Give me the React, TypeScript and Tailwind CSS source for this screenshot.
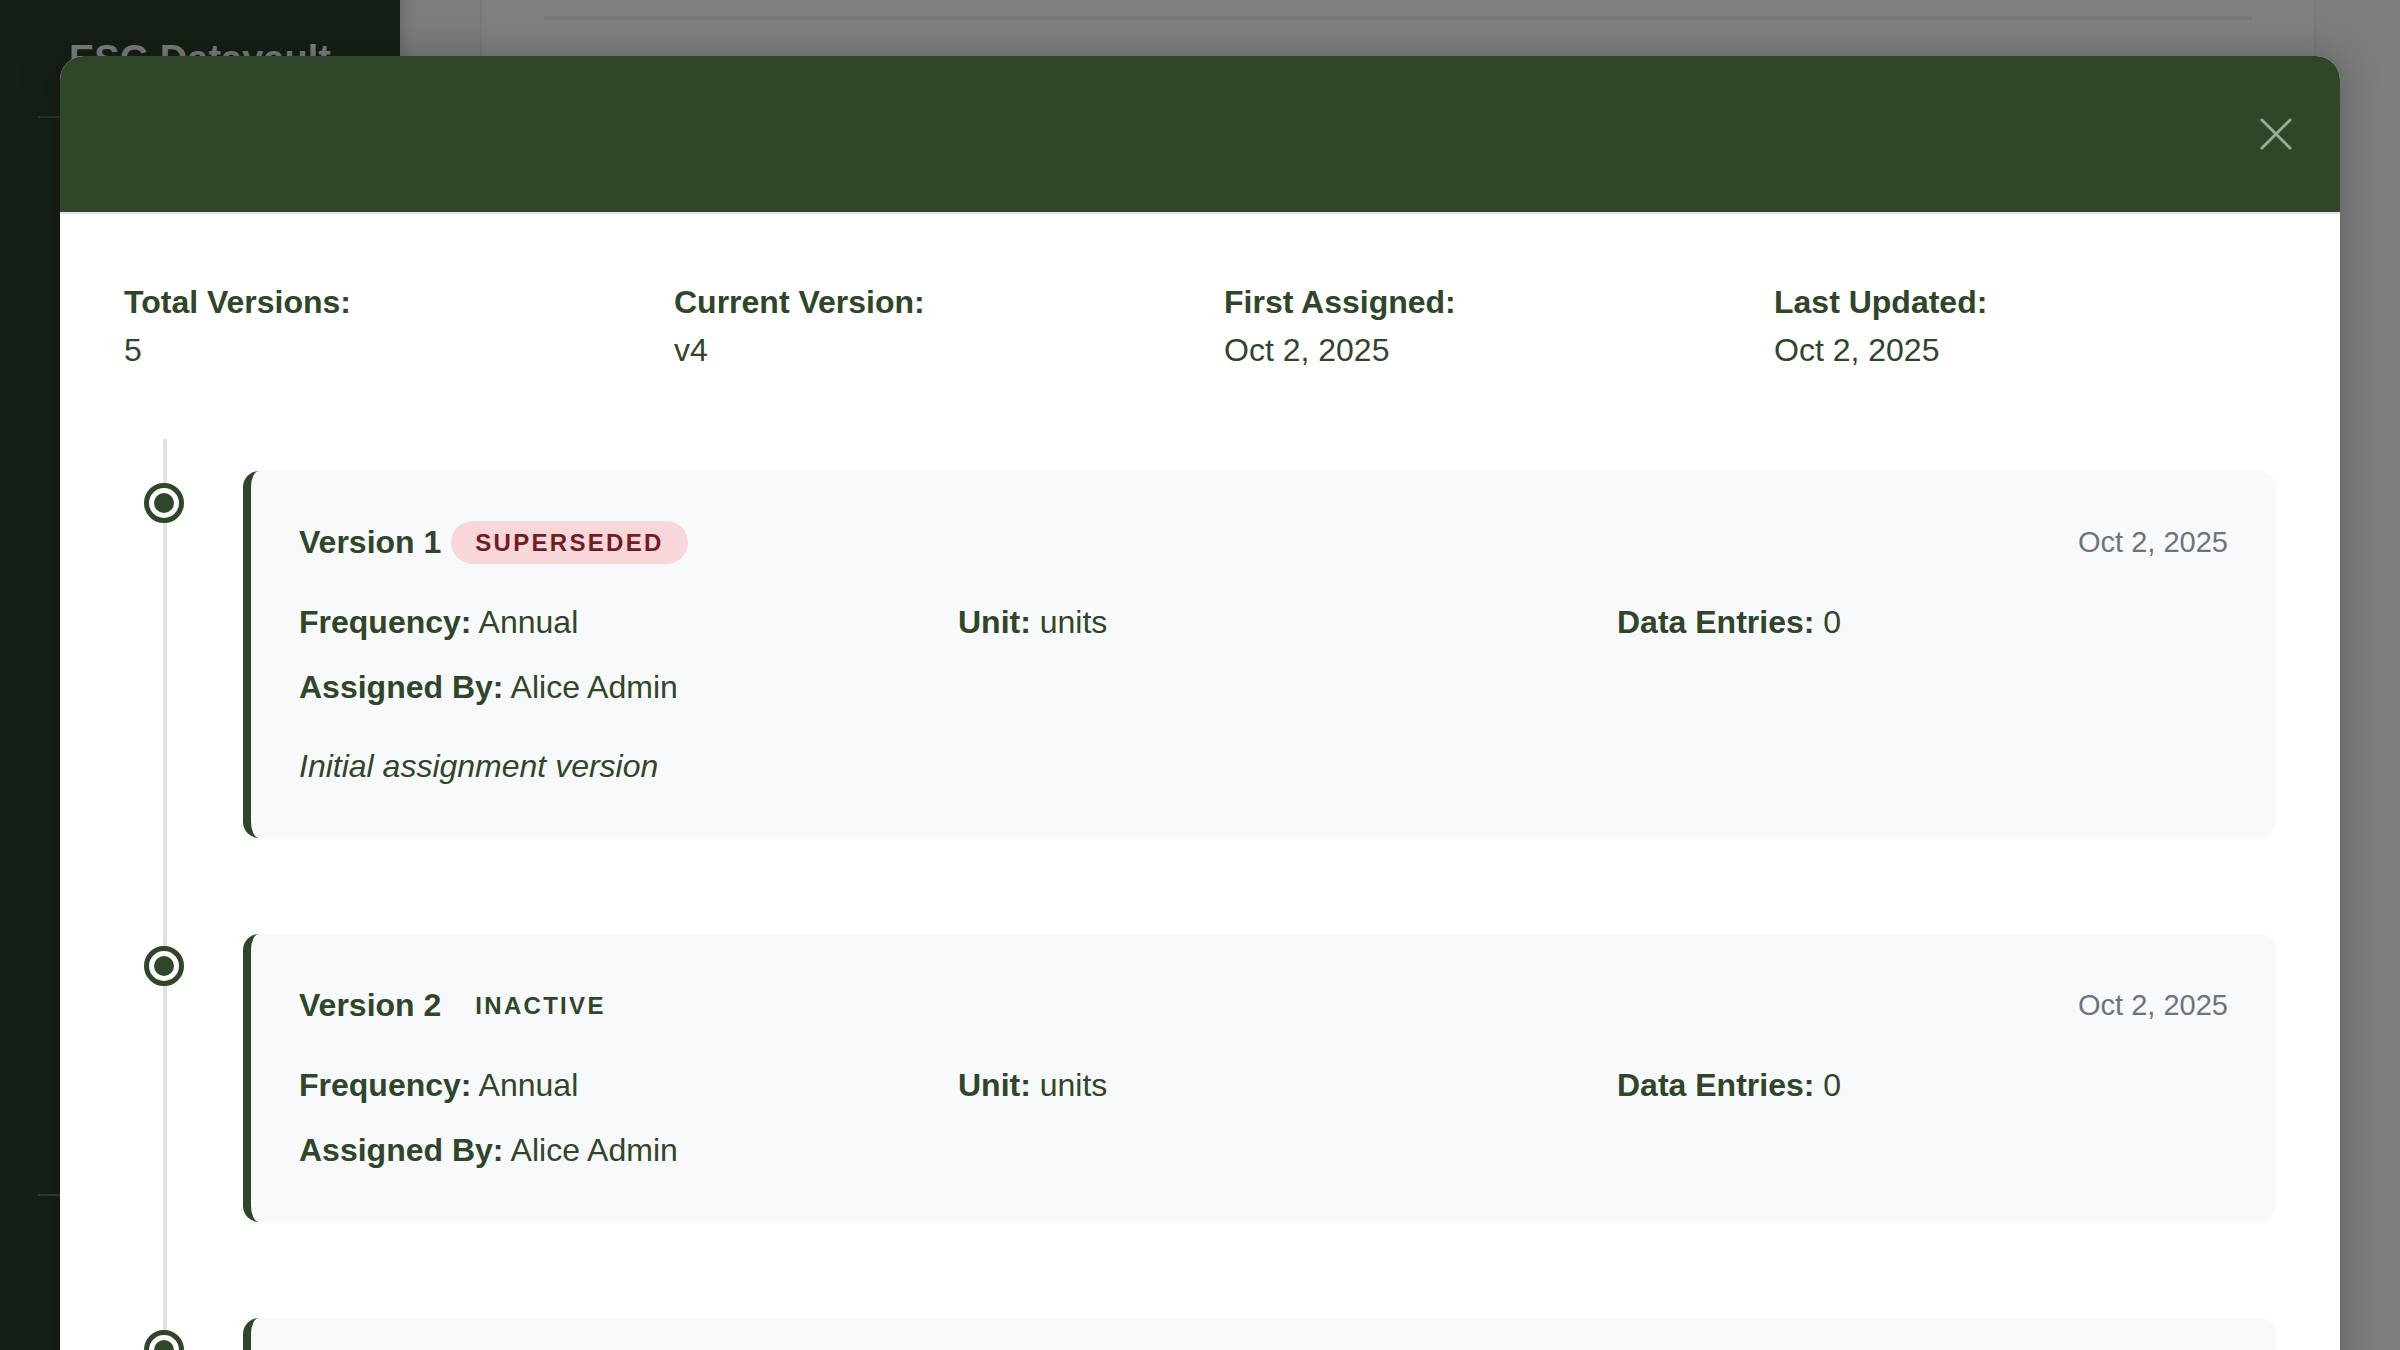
import React from "react";

type Version = {
  number: number;
  status: "superseded" | "inactive" | "active";
  date: string;
  frequency: string;
  unit: string;
  entries: number;
  assignedBy: string;
  note?: string;
};

const versions: Version[] = [
  {
    number: 1,
    status: "superseded",
    date: "Oct 2, 2025",
    frequency: "Annual",
    unit: "units",
    entries: 0,
    assignedBy: "Alice Admin",
    note: "Initial assignment version",
  },
  {
    number: 2,
    status: "inactive",
    date: "Oct 2, 2025",
    frequency: "Annual",
    unit: "units",
    entries: 0,
    assignedBy: "Alice Admin",
  },
];

function DotCircle() {
  return (
    <svg width="40" height="40" viewBox="0 0 40 40" className="block">
      <circle cx="20" cy="20" r="17.5" fill="#ffffff" stroke="#2f4629" strokeWidth="5" />
      <circle cx="20" cy="20" r="10" fill="#2f4629" />
    </svg>
  );
}

function StatusBadge({ status }: { status: Version["status"] }) {
  if (status === "superseded") {
    return (
      <span className="ml-[10px] inline-block rounded-full bg-[#f8d7da] px-[24px] py-[8px] text-[24px] font-bold uppercase leading-[27px] tracking-[2.3px] text-[#721c24]">
        Superseded
      </span>
    );
  }
  return (
    <span className="ml-[10px] inline-block rounded-full px-[24px] py-[8px] text-[24px] font-bold uppercase leading-[27px] tracking-[2.3px] text-[#2f4629]">
      {status === "inactive" ? "Inactive" : "Active"}
    </span>
  );
}

function VersionCard({ v }: { v: Version }) {
  return (
    <div className="mb-[96px] flex">
      <div className="w-[119px] shrink-0">
        <div className="ml-[20px] mt-[12px]">
          <DotCircle />
        </div>
      </div>
      <div className="flex-1 rounded-[16px] border-l-[8px] border-[#2f4629] bg-[#f8f9fa] p-[48px]">
        <div className="flex h-[46px] items-center justify-between">
          <div className="flex items-center">
            <span className="text-[32px] font-bold leading-[46px]">Version {v.number}</span>
            <StatusBadge status={v.status} />
          </div>
          <span className="text-[29px] leading-[46px] text-[#6c757d]">{v.date}</span>
        </div>
        <div className="mt-[33px] grid grid-cols-3 gap-x-[48px] gap-y-[17px] text-[32px] leading-[48px]">
          <div>
            <span className="font-bold">Frequency:</span> {v.frequency}
          </div>
          <div>
            <span className="font-bold">Unit:</span> {v.unit}
          </div>
          <div>
            <span className="font-bold">Data Entries:</span> {v.entries}
          </div>
          <div>
            <span className="font-bold">Assigned By:</span> {v.assignedBy}
          </div>
        </div>
        {v.note ? (
          <p className="mt-[31px] text-[32px] italic leading-[48px]">{v.note}</p>
        ) : null}
      </div>
    </div>
  );
}

// next card, only its top edge shows above the fold
function NextCardStub() {
  return (
    <div className="flex">
      <div className="w-[119px] shrink-0">
        <div className="ml-[20px] mt-[12px]">
          <DotCircle />
        </div>
      </div>
      <div className="h-[287px] flex-1 rounded-[16px] border-l-[8px] border-[#2f4629] bg-[#f8f9fa]" />
    </div>
  );
}

export default function App() {
  return (
    <div
      className="relative h-[1350px] w-[2400px] overflow-hidden bg-[#808080] text-[#2f4629]"
      style={{ fontFamily: '"Liberation Sans", Arial, Helvetica, sans-serif' }}
    >
      {/* dimmed app behind the modal */}
      <div className="flex h-full">
        <aside className="relative h-full w-[400px] shrink-0 bg-[#161f16]">
          <div className="px-[69px] pt-[36px] text-[38px] font-bold leading-[46px] text-[#7b7e7b]">
            ESG Datavault
          </div>
          <div className="ml-[38px] mt-[34px] h-[2px] bg-[#2b332b]" />
          <div className="ml-[38px] mt-[1076px] h-[2px] bg-[#333a33]" />
        </aside>
        <main className="flex h-full flex-1">
          <div className="w-[82px] shrink-0 border-r-2 border-[#777877] bg-[#7c7d7c] shadow-[inset_12px_0_12px_-8px_rgba(0,0,0,0.15)]" />
          <div className="w-[1834px] shrink-0 border-r-2 border-[#777877] px-[62px] pt-[16px]">
            <div className="h-[4px] bg-[#767779]" />
          </div>
          <div className="flex-1 bg-[#7d7d7d]" />
        </main>
      </div>

      {/* modal */}
      <div className="absolute left-[60px] top-[56px] w-[2280px] rounded-t-[24px] bg-white shadow-[0_0_40px_rgba(0,0,0,0.25)]">
        <div className="flex h-[158px] items-center justify-end rounded-t-[24px] border-b-2 border-[#dee2e6] bg-[#2f4629] pr-[48px]">
          <svg width="32" height="32" viewBox="0 0 32 32" className="block">
            <path d="M2 2 L30 30 M30 2 L2 30" stroke="#9aab95" strokeWidth="3" strokeLinecap="round" />
          </svg>
        </div>

        <div className="px-[64px] pt-[64px]">
          <div className="grid grid-cols-4 gap-x-[48px] text-[32px] leading-[48px]">
            <div>
              <div className="font-bold">Total Versions:</div>
              <div>5</div>
            </div>
            <div>
              <div className="font-bold">Current Version:</div>
              <div>v4</div>
            </div>
            <div>
              <div className="font-bold">First Assigned:</div>
              <div>Oct 2, 2025</div>
            </div>
            <div>
              <div className="font-bold">Last Updated:</div>
              <div>Oct 2, 2025</div>
            </div>
          </div>

          <div className="relative mt-[65px] pt-[32px]">
            <div className="absolute bottom-0 left-[39px] top-0 w-[4px] bg-[#dee2e6]" />
            <div className="relative">
              {versions.map((v) => (
                <VersionCard key={v.number} v={v} />
              ))}
              <NextCardStub />
            </div>
          </div>
        </div>
      </div>
    </div>
  );
}
